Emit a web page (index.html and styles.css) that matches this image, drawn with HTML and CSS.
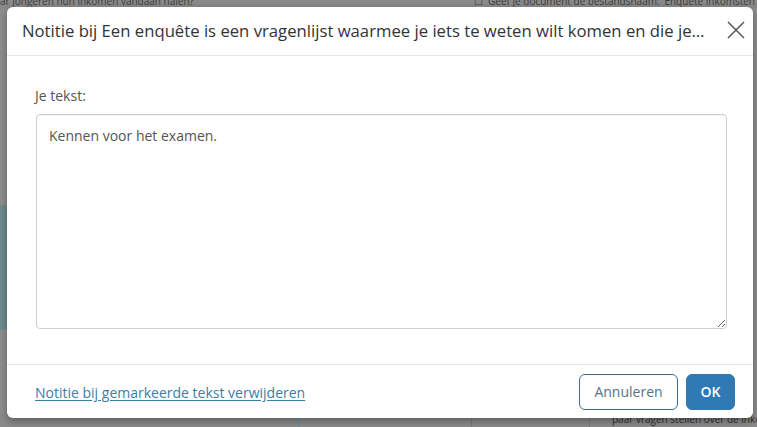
FILE: index.html
```html
<!DOCTYPE html>
<html lang="nl">
<head>
<meta charset="utf-8">
<title>Notitie</title>
<link rel="stylesheet" href="styles.css">
</head>
<body>
<div class="page">
  <div class="page-top">
    <span class="bg-text">ar jongeren hun inkomen vandaan halen?</span>
    <span class="bg-text bg-check">&#9744;&nbsp; Geef je document de bestandsnaam: 'Enquête inkomsten</span>
  </div>
  <div class="page-mid">
    <div class="strip"></div>
  </div>
  <div class="page-bottom">
    <div class="col c1"></div>
    <div class="col c2"></div>
    <div class="col c3"></div>
    <div class="col c4"><span class="bg-text">paar vragen stellen over de inko</span></div>
  </div>
</div>

<div class="modal" role="dialog">
  <div class="modal-header">
    <h4 class="modal-title">Notitie bij Een enquête is een vragenlijst waarmee je iets te weten wilt komen en die je voorlegt aan een groep mensen</h4>
    <button class="close" aria-label="Sluiten">
      <svg width="18" height="18" viewBox="0 0 18 18"><path d="M1 1 L17 17 M17 1 L1 17" stroke="#555" stroke-width="1.5" fill="none"/></svg>
    </button>
  </div>
  <div class="modal-body">
    <label class="label">Je tekst:</label>
    <textarea class="note">Kennen voor het examen.</textarea>
  </div>
  <div class="modal-footer">
    <a class="remove" href="#">Notitie bij gemarkeerde tekst verwijderen</a>
    <div class="actions">
      <button class="btn btn-default">Annuleren</button>
      <button class="btn btn-primary">OK</button>
    </div>
  </div>
</div>
</body>
</html>
```
FILE: styles.css
```css
* { box-sizing: border-box; }
html, body { margin: 0; padding: 0; }
body {
  width: 757px;
  height: 427px;
  overflow: hidden;
  font-family: "Open Sans", "Liberation Sans", sans-serif;
  background: #8c8c8c;
  position: relative;
}
.page {
  height: 427px;
  display: flex;
  flex-direction: column;
  background: #8e8e8e;
}
.page-top {
  display: flex;
  justify-content: space-between;
  height: 8px;
  overflow: hidden;
  background: #8a8a8a;
}
.bg-text {
  font-size: 10px;
  line-height: 10px;
  color: #3c3c3c;
  margin-top: -4px;
  white-space: nowrap;
}
.bg-check { padding-right: 2px; }
.page-mid {
  flex: 1;
  padding-top: 197px;
}
.strip {
  width: 8px;
  height: 125px;
  background: #6f8c8e;
}
.page-bottom {
  height: 14px;
  display: grid;
  grid-template-columns: 297px 174px 118px 1fr;
  background: #8b8b8b;
}
.col { border-left: 1px solid #7c7c7c; }
.c1 { border-left: none; }
.c2 { border-left: 3px solid #7a8c96; }
.c4 { padding-left: 22px; overflow: hidden; }
.c4 .bg-text { display: block; margin-top: 0; padding-top: 1px; color: #2f2f2f; }

.modal {
  position: absolute;
  left: 7px;
  top: 7px;
  width: 746px;
  height: 411px;
  background: #fff;
  border-radius: 6px;
  box-shadow: 0 3px 9px rgba(0,0,0,0.35);
  display: flex;
  flex-direction: column;
}
.modal-header {
  height: 49px;
  border-bottom: 1px solid #e5e5e5;
  display: flex;
  align-items: center;
  padding: 0 8px 0 15px;
  gap: 20px;
}
.modal-title {
  flex: 1;
  min-width: 0;
  margin: 0;
  font-size: 16.7px;
  font-weight: 400;
  color: #333;
  white-space: nowrap;
  overflow: hidden;
  text-overflow: ellipsis;
  line-height: 24px;
  padding-bottom: 1px;
}
.close {
  border: 0;
  background: none;
  padding: 0;
  width: 18px;
  height: 18px;
  margin-top: -2px;
  cursor: pointer;
  display: flex;
}
.modal-body {
  flex: 1;
  padding: 30px 26px 0 28px;
  display: flex;
  flex-direction: column;
}
.label {
  font-size: 14px;
  color: #555;
  line-height: 20px;
  margin-bottom: 8px;
}
.note {
  width: 691px;
  height: 215px;
  margin-left: 1px;
  border: 1px solid #cfcfcf;
  border-radius: 4px;
  padding: 11px 12px;
  font-family: "Open Sans", "Liberation Sans", sans-serif;
  font-size: 14px;
  line-height: 20px;
  color: #555;
  resize: vertical;
  box-shadow: inset 0 1px 1px rgba(0,0,0,0.06);
}
.modal-footer {
  height: 54px;
  border-top: 1px solid #e5e5e5;
  display: flex;
  align-items: center;
  justify-content: space-between;
  padding: 0 18px 0 28px;
}
.remove {
  font-size: 14px;
  color: #3a7ea3;
  text-decoration: underline;
  text-underline-offset: 2px;
  padding-top: 1px;
}
.actions {
  display: flex;
  gap: 8px;
}
.btn {
  height: 36px;
  border-radius: 6px;
  font-family: "Open Sans", "Liberation Sans", sans-serif;
  font-size: 14px;
  padding: 0;
  cursor: pointer;
}
.btn-default {
  width: 99px;
  background: #fff;
  border: 1px solid #3f6d82;
  color: #567486;
}
.btn-primary {
  width: 49px;
  background: #2f7ab4;
  border: 1px solid #2f7ab4;
  color: #fff;
  font-weight: 600;
}
```
